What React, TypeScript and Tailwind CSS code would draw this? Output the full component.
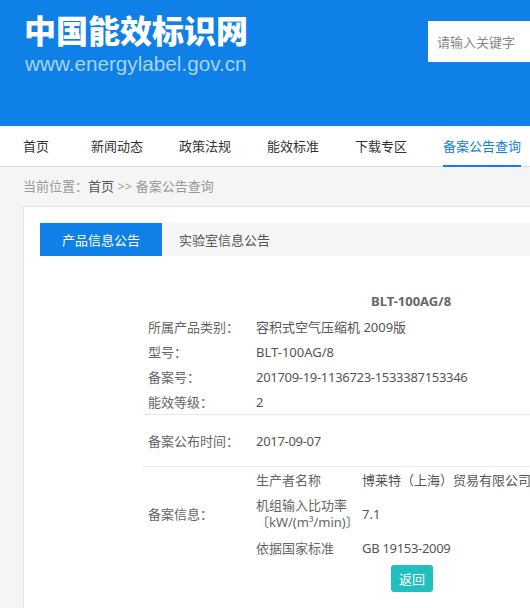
import { ReactNode } from 'react';

const font = { fontFamily: '"Noto Sans", "Noto Sans CJK SC", sans-serif' };

const navItems = ['首页', '新闻动态', '政策法规', '能效标准', '下载专区', '备案公告查询'];

function InfoRow({ label, children }: { label: string; children: ReactNode }) {
    return (
        <div className="flex h-[25px] items-center">
            <div className="w-[113px] pl-[5px] text-[#666]">{label}</div>
            <div className="text-[#555]">{children}</div>
        </div>
    );
}

function SubRow({ label, children, tall }: { label: ReactNode; children: ReactNode; tall?: boolean }) {
    return (
        <div className={`flex items-center ${tall ? 'h-[42px]' : 'h-[26px]'}`}>
            <div className="w-[106px] leading-[17px] text-[#666]">{label}</div>
            <div className="text-[#555]">{children}</div>
        </div>
    );
}

export default function App() {
    return (
        <div className="w-full overflow-hidden bg-[#f5f5f5] text-[13px] leading-[20px]" style={font}>
            <div className="w-[1200px]">
                {/* header */}
                <div className="flex h-[126px] bg-[#0f80e8]">
                    <div className="pl-[24px]">
                        <div
                            className="mt-[13px] text-[32px] font-black leading-[32px] text-white"
                            style={{ fontFamily: '"Noto Sans CJK SC", sans-serif' }}
                        >
                            中国能效标识网
                        </div>
                        <div
                            className="mt-[8px] pl-[1px] text-[20.7px] leading-[22px] text-[#a9d3fb]"
                            style={{ fontFamily: '"Liberation Sans", Arial, sans-serif' }}
                        >
                            www.energylabel.gov.cn
                        </div>
                    </div>
                    <div className="ml-[180px] mt-[21px] flex h-[41px] w-[300px] items-center bg-white pl-[9px] text-[#888]">
                        请输入关键字
                    </div>
                </div>

                {/* nav */}
                <div className="flex h-[41px] border-b border-[#dddddd] bg-white pl-[23px] text-[#333]">
                    {navItems.map((item, i) => (
                        <div
                            key={item}
                            className={`flex items-center ${i === 0 ? 'mr-[42px]' : 'mr-[36px]'} ${
                                i === navItems.length - 1 ? '-mb-px border-b-2 border-[#0f80e8] text-[#0f80e8]' : ''
                            }`}
                        >
                            {item}
                        </div>
                    ))}
                </div>

                {/* breadcrumb */}
                <div className="pl-[23px] pt-[9px] text-[#999]">
                    当前位置：<span className="text-[#555]">首页</span> &gt;&gt; 备案公告查询
                </div>

                {/* card */}
                <div className="ml-[23px] mt-[10px] h-[420px] border border-[#e3e3e3] bg-white pl-[16px] pt-[16px]">
                    <div className="flex h-[33px] bg-[#f5f5f5]">
                        <div className="flex w-[122px] items-center justify-center bg-[#0f80e8] text-white">产品信息公告</div>
                        <div className="flex items-center pl-[17px] text-[#555]">实验室信息公告</div>
                    </div>

                    <div className="mt-[35px] pl-[331px] font-bold text-[#666]">BLT-100AG/8</div>

                    <div className="ml-[103px] mt-[3px]">
                        <InfoRow label="所属产品类别：">容积式空气压缩机 2009版</InfoRow>
                        <InfoRow label="型号：">BLT-100AG/8</InfoRow>
                        <InfoRow label="备案号：">
                            <span className="tracking-[-0.3px]">201709-19-1136723-1533387153346</span>
                        </InfoRow>
                        <InfoRow label="能效等级：">2</InfoRow>

                        <div className="flex h-[52px] items-center border-t border-[#e8e8e8]">
                            <div className="w-[113px] pl-[5px] text-[#666]">备案公布时间：</div>
                            <div className="tracking-[-0.3px] text-[#555]">2017-09-07</div>
                        </div>

                        <div className="flex items-center border-t border-[#e8e8e8]">
                            <div className="w-[113px] pl-[5px] text-[#666]">备案信息：</div>
                            <div>
                                <SubRow label="生产者名称">博莱特（上海）贸易有限公司</SubRow>
                                <SubRow
                                    tall
                                    label={
                                        <>
                                            机组输入比功率
                                            <br />
                                            〔kW/(m³/min)〕
                                        </>
                                    }
                                >
                                    7.1
                                </SubRow>
                                <SubRow label="依据国家标准">
                                    <span className="tracking-[-0.3px]">GB 19153-2009</span>
                                </SubRow>
                            </div>
                        </div>

                        <div className="ml-[248px] mt-[4px] flex h-[27px] w-[42px] items-center justify-center rounded-[3px] bg-[#22bfbf] text-white">
                            返回
                        </div>
                    </div>
                </div>
            </div>
        </div>
    );
}
